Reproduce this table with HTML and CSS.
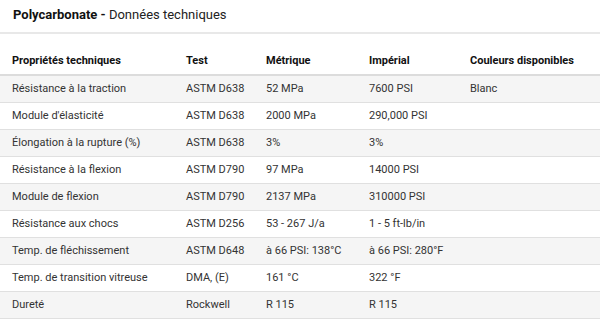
FILE: index.html
```html
<!DOCTYPE html>
<html lang="fr">
<head>
<meta charset="utf-8">
<link rel="stylesheet" href="styles.css">
</head>
<body>
<div class="panel">
  <h1 class="title"><strong>Polycarbonate -</strong> Données techniques</h1>
  <table class="specs">
    <colgroup>
      <col class="c1"><col class="c2"><col class="c3"><col class="c4"><col class="c5">
    </colgroup>
    <thead>
      <tr><th>Propriétés techniques</th><th>Test</th><th>Métrique</th><th>Impérial</th><th>Couleurs disponibles</th></tr>
    </thead>
    <tbody>
      <tr><td>Résistance à la traction</td><td>ASTM D638</td><td>52 MPa</td><td>7600 PSI</td><td>Blanc</td></tr>
      <tr><td>Module d'élasticité</td><td>ASTM D638</td><td>2000 MPa</td><td>290,000 PSI</td><td></td></tr>
      <tr><td>Élongation à la rupture (%)</td><td>ASTM D638</td><td>3%</td><td>3%</td><td></td></tr>
      <tr><td>Résistance à la flexion</td><td>ASTM D790</td><td>97 MPa</td><td>14000 PSI</td><td></td></tr>
      <tr><td>Module de flexion</td><td>ASTM D790</td><td>2137 MPa</td><td>310000 PSI</td><td></td></tr>
      <tr><td>Résistance aux chocs</td><td>ASTM D256</td><td>53 - 267 J/a</td><td>1 - 5 ft-lb/in</td><td></td></tr>
      <tr><td>Temp. de fléchissement</td><td>ASTM D648</td><td>à 66 PSI: 138°C</td><td>à 66 PSI: 280°F</td><td></td></tr>
      <tr><td>Temp. de transition vitreuse</td><td>DMA, (E)</td><td>161 °C</td><td>322 °F</td><td></td></tr>
      <tr><td>Dureté</td><td>Rockwell</td><td>R 115</td><td>R 115</td><td></td></tr>
    </tbody>
  </table>
</div>
</body>
</html>
```
FILE: styles.css
```css
html, body {
  margin: 0;
  padding: 0;
  background: #fff;
}
body {
  font-family: Roboto, "Liberation Sans", sans-serif;
  color: #333;
}
.panel {
  width: 600px;
}
.title {
  margin: 0;
  padding: 6px 13px 0;
  height: 26px;
  font-size: 13px;
  font-weight: 400;
  line-height: 18px;
  color: #222;
  border-bottom: 2px solid #e8e8e8;
}
.title strong {
  font-weight: 700;
  color: #111;
}
.specs {
  width: 600px;
  border-collapse: collapse;
  table-layout: fixed;
  font-size: 11px;
}
.c1 { width: 174px; }
.c2 { width: 80px; }
.c3 { width: 103px; }
.c4 { width: 101px; }
.c5 { width: 142px; }
.specs th {
  text-align: left;
  font-weight: 700;
  color: #111;
  padding: 20px 12px 0;
  height: 20px;
  vertical-align: top;
  border-bottom: 2px solid #dcdcdc;
  line-height: 14px;
}
.specs td {
  padding: 0 12px;
  height: 26px;
  line-height: 14px;
  border-bottom: 1px solid #e0e0e0;
  white-space: nowrap;
  color: #333;
}
.specs tbody tr:nth-child(odd) td {
  background: #f5f5f5;
}
```
